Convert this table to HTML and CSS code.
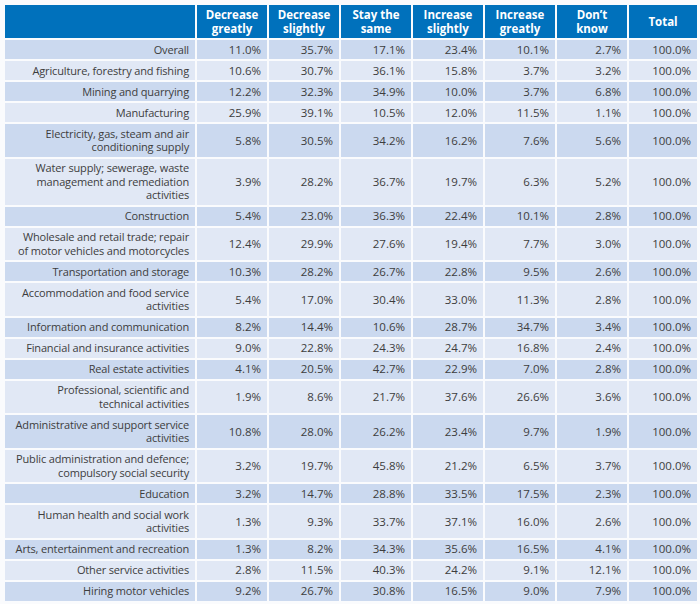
FILE: index.html
```html
<!DOCTYPE html>
<html lang="en">
<head>
<meta charset="utf-8">
<title>Table</title>
<link rel="stylesheet" href="styles.css">
</head>
<body>
<table class="data">
  <colgroup>
    <col class="c-label">
    <col class="c-num"><col class="c-num"><col class="c-num"><col class="c-num"><col class="c-num"><col class="c-num"><col class="c-total">
  </colgroup>
  <thead>
    <tr>
      <th></th>
      <th>Decrease greatly</th>
      <th>Decrease slightly</th>
      <th>Stay the same</th>
      <th>Increase slightly</th>
      <th>Increase greatly</th>
      <th>Don’t know</th>
      <th>Total</th>
    </tr>
  </thead>
  <tbody>
    <tr class="dark"><td>Overall</td><td>11.0%</td><td>35.7%</td><td>17.1%</td><td>23.4%</td><td>10.1%</td><td>2.7%</td><td>100.0%</td></tr>
    <tr class="light"><td>Agriculture, forestry and fishing</td><td>10.6%</td><td>30.7%</td><td>36.1%</td><td>15.8%</td><td>3.7%</td><td>3.2%</td><td>100.0%</td></tr>
    <tr class="dark"><td>Mining and quarrying</td><td>12.2%</td><td>32.3%</td><td>34.9%</td><td>10.0%</td><td>3.7%</td><td>6.8%</td><td>100.0%</td></tr>
    <tr class="light"><td>Manufacturing</td><td>25.9%</td><td>39.1%</td><td>10.5%</td><td>12.0%</td><td>11.5%</td><td>1.1%</td><td>100.0%</td></tr>
    <tr class="dark"><td>Electricity, gas, steam and air<br>conditioning supply</td><td>5.8%</td><td>30.5%</td><td>34.2%</td><td>16.2%</td><td>7.6%</td><td>5.6%</td><td>100.0%</td></tr>
    <tr class="light"><td>Water supply; sewerage, waste<br>management and remediation<br>activities</td><td>3.9%</td><td>28.2%</td><td>36.7%</td><td>19.7%</td><td>6.3%</td><td>5.2%</td><td>100.0%</td></tr>
    <tr class="dark"><td>Construction</td><td>5.4%</td><td>23.0%</td><td>36.3%</td><td>22.4%</td><td>10.1%</td><td>2.8%</td><td>100.0%</td></tr>
    <tr class="light"><td>Wholesale and retail trade; repair<br>of motor vehicles and motorcycles</td><td>12.4%</td><td>29.9%</td><td>27.6%</td><td>19.4%</td><td>7.7%</td><td>3.0%</td><td>100.0%</td></tr>
    <tr class="dark"><td>Transportation and storage</td><td>10.3%</td><td>28.2%</td><td>26.7%</td><td>22.8%</td><td>9.5%</td><td>2.6%</td><td>100.0%</td></tr>
    <tr class="light"><td>Accommodation and food service<br>activities</td><td>5.4%</td><td>17.0%</td><td>30.4%</td><td>33.0%</td><td>11.3%</td><td>2.8%</td><td>100.0%</td></tr>
    <tr class="dark"><td>Information and communication</td><td>8.2%</td><td>14.4%</td><td>10.6%</td><td>28.7%</td><td>34.7%</td><td>3.4%</td><td>100.0%</td></tr>
    <tr class="light"><td>Financial and insurance activities</td><td>9.0%</td><td>22.8%</td><td>24.3%</td><td>24.7%</td><td>16.8%</td><td>2.4%</td><td>100.0%</td></tr>
    <tr class="dark"><td>Real estate activities</td><td>4.1%</td><td>20.5%</td><td>42.7%</td><td>22.9%</td><td>7.0%</td><td>2.8%</td><td>100.0%</td></tr>
    <tr class="light"><td>Professional, scientific and<br>technical activities</td><td>1.9%</td><td>8.6%</td><td>21.7%</td><td>37.6%</td><td>26.6%</td><td>3.6%</td><td>100.0%</td></tr>
    <tr class="dark"><td>Administrative and support service<br>activities</td><td>10.8%</td><td>28.0%</td><td>26.2%</td><td>23.4%</td><td>9.7%</td><td>1.9%</td><td>100.0%</td></tr>
    <tr class="light"><td>Public administration and defence;<br>compulsory social security</td><td>3.2%</td><td>19.7%</td><td>45.8%</td><td>21.2%</td><td>6.5%</td><td>3.7%</td><td>100.0%</td></tr>
    <tr class="dark"><td>Education</td><td>3.2%</td><td>14.7%</td><td>28.8%</td><td>33.5%</td><td>17.5%</td><td>2.3%</td><td>100.0%</td></tr>
    <tr class="light"><td>Human health and social work<br>activities</td><td>1.3%</td><td>9.3%</td><td>33.7%</td><td>37.1%</td><td>16.0%</td><td>2.6%</td><td>100.0%</td></tr>
    <tr class="dark"><td>Arts, entertainment and recreation</td><td>1.3%</td><td>8.2%</td><td>34.3%</td><td>35.6%</td><td>16.5%</td><td>4.1%</td><td>100.0%</td></tr>
    <tr class="light"><td>Other service activities</td><td>2.8%</td><td>11.5%</td><td>40.3%</td><td>24.2%</td><td>9.1%</td><td>12.1%</td><td>100.0%</td></tr>
    <tr class="dark"><td>Hiring motor vehicles</td><td>9.2%</td><td>26.7%</td><td>30.8%</td><td>16.5%</td><td>9.0%</td><td>7.9%</td><td>100.0%</td></tr>
  </tbody>
</table>
</body>
</html>
```

FILE: styles.css
```css
html, body {
  margin: 0;
  padding: 0;
  background: #fafbfd;
}
body {
  padding: 3px;
  font-family: "Open Sans", "Noto Sans", "DejaVu Sans", sans-serif;
  color: #3d3d3d;
}
.data {
  border-collapse: separate;
  border-spacing: 2px;
  table-layout: fixed;
  width: 696px;
  font-size: 11.5px;
  line-height: 13.5px;
}
.c-label { width: 190px; }
.c-num { width: 70px; }
.c-total { width: 68px; }
.data th {
  background: #0071bc;
  color: #ffffff;
  font-weight: 700;
  font-size: 11.5px;
  line-height: 13.5px;
  text-align: center;
  padding: 3px 4px;
  height: 27px;
}
.data td {
  text-align: right;
  padding: 2.75px 6px;
  vertical-align: middle;
}
.data td:first-child {
  font-size: 11px;
  padding-left: 2px;
  white-space: nowrap;
  letter-spacing: -0.15px;
}
.dark td { background: #cbd9ef; }
.light td { background: #e1e8f5; }
```
